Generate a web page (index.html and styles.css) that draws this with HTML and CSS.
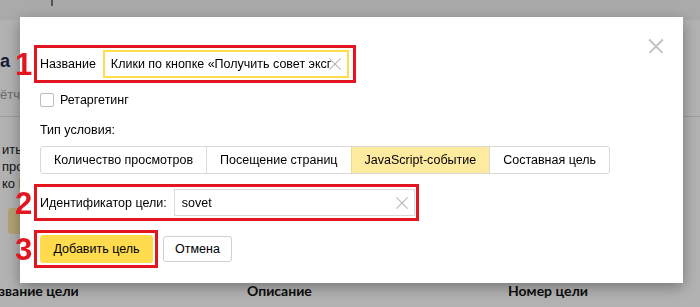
FILE: index.html
```html
<!DOCTYPE html>
<html lang="ru">
<head>
  <meta charset="UTF-8">
  <title>Добавить цель</title>
  <link rel="stylesheet" href="styles.css">
</head>
<body>
  <div class="page">
    <div class="page-header"><span class="header-mark"></span></div>
    <div class="page-title">а</div>
    <div class="page-sub">ётч</div>
    <div class="page-line"></div>
    <div class="page-text">
      <div>ить</div>
      <div>про</div>
      <div>ко L</div>
    </div>
    <div class="page-btn"></div>
    <div class="goal-head">
      <span class="col-name">Название цели</span>
      <span class="col-desc">Описание</span>
      <span class="col-num">Номер цели</span>
    </div>
  </div>

  <div class="overlay"></div>

  <div class="modal">
    <span class="modal-close"></span>

    <div class="mark-box mark-name">
      <span class="mark-num">1</span>
      <label class="field-label">Название</label>
      <div class="input input-active">
        <span class="input-text">Клики по кнопке «Получить совет эксперта»</span>
        <span class="clear"></span>
      </div>
    </div>

    <label class="check-row">
      <span class="checkbox"></span>
      Ретаргетинг
    </label>

    <div class="cond-title">Тип условия:</div>
    <div class="tabs">
      <span class="tab">Количество просмотров</span>
      <span class="tab">Посещение страниц</span>
      <span class="tab tab-selected">JavaScript-событие</span>
      <span class="tab">Составная цель</span>
    </div>

    <div class="mark-box mark-id">
      <span class="mark-num">2</span>
      <label class="field-label">Идентификатор цели:</label>
      <div class="input input-id">
        <span class="input-text">sovet</span>
        <span class="clear"></span>
      </div>
    </div>

    <div class="actions">
      <div class="mark-box mark-btn">
        <span class="mark-num">3</span>
        <button class="btn btn-add">Добавить цель</button>
      </div>
      <button class="btn btn-cancel">Отмена</button>
    </div>
  </div>
</body>
</html>
```

FILE: styles.css
```css
body {
  margin: 0;
  width: 700px;
  height: 307px;
  overflow: hidden;
  background: #fff;
  font-family: Arial, "Liberation Sans", sans-serif;
  font-size: 13px;
  color: #000;
}
.page {
  height: 307px;
}
.page-header {
  height: 20px;
  background: #f4f4f4;
  position: relative;
}
.header-mark {
  position: absolute;
  left: 51px;
  top: 0;
  width: 2px;
  height: 6px;
  background: #777;
}
.page-title {
  margin: 31px 0 0 0;
  font-size: 18px;
  font-weight: bold;
  color: #1e2a4f;
  line-height: 20px;
}
.page-sub {
  margin: 16px 0 0 0;
  color: #999;
  font-size: 13px;
}
.page-line {
  margin-top: 14px;
  height: 1px;
  background: #e2e2e2;
}
.page-text {
  margin: 24px 0 0 2px;
  font-size: 13px;
  line-height: 17px;
  color: #222;
}
.page-btn {
  margin: 16px 0 0 8px;
  width: 30px;
  height: 26px;
  border-radius: 3px;
  background: #ffe9a8;
}
.goal-head {
  margin-top: 48px;
  font-family: Lato, "Open Sans", sans-serif;
  font-weight: bold;
  font-size: 14px;
  color: #111;
  display: flex;
}
.col-name { margin-left: -19px; width: 266px; }
.col-desc { width: 261px; }
.overlay {
  position: fixed;
  inset: 0;
  background: rgba(0, 0, 0, 0.3);
}
.modal {
  position: fixed;
  left: 20px;
  top: 17px;
  width: 663px;
  height: 266px;
  box-sizing: border-box;
  padding: 28px 20px 0;
  background: #fff;
  font-size: 12.5px;
  box-shadow: 0 4px 14px rgba(0, 0, 0, 0.35);
}
.modal-close {
  position: absolute;
  right: 20px;
  top: 22px;
  width: 14px;
  height: 14px;
}
.modal-close::before,
.modal-close::after,
.clear::before,
.clear::after {
  content: "";
  position: absolute;
  left: 50%;
  top: 50%;
  width: 19px;
  height: 1.5px;
  background: #c4c4c4;
  transform: translate(-50%, -50%) rotate(45deg);
}
.modal-close::after,
.clear::after {
  transform: translate(-50%, -50%) rotate(-45deg);
}
.mark-box {
  position: relative;
  display: flex;
  align-items: center;
  margin-left: -6px;
  border: 3px solid #e3151f;
  padding: 2px 4px 2px 3px;
}
.mark-name { width: 322px; box-sizing: border-box; }
.mark-id { width: 385px; box-sizing: border-box; padding-right: 1px; }
.mark-num {
  position: absolute;
  left: -22px;
  top: 50%;
  transform: translateY(-50%);
  font-size: 31px;
  font-weight: bold;
  color: #e3151f;
  line-height: 1;
}
.field-label {
  margin-right: 7px;
  white-space: nowrap;
}
.input {
  position: relative;
  flex: 1;
  height: 28px;
  box-sizing: border-box;
  border: 1px solid #d9d9d9;
  display: flex;
  align-items: center;
  padding: 0 16px 0 7px;
  overflow: hidden;
}
.input-active {
  border: 2px solid #ffdb4d;
  padding-left: 6px;
}
.input-id { height: 27px; }
.input-text {
  white-space: nowrap;
  overflow: hidden;
  font-size: 12.5px;
}
.clear {
  position: absolute;
  right: 6px;
  top: 50%;
  width: 12px;
  height: 12px;
  margin-top: -6px;
}
.clear::before,
.clear::after {
  width: 16px;
  background: #b5b5b5;
  height: 1px;
}
.check-row {
  display: flex;
  align-items: center;
  margin-top: 10px;
  height: 14px;
}
.checkbox {
  width: 12px;
  height: 12px;
  border: 1px solid #bdbdbd;
  border-radius: 2px;
  margin-right: 6px;
}
.cond-title {
  margin-top: 16px;
}
.tabs {
  display: flex;
  margin-top: 9px;
  width: max-content;
  border: 1px solid #d9d9d9;
  border-radius: 3px;
  overflow: hidden;
}
.tab {
  height: 26px;
  line-height: 26px;
  padding: 0 13px;
  border-left: 1px solid #d9d9d9;
}
.tab:first-child { border-left: none; }
.tab-selected {
  background: #ffeba0;
  border-left-color: #f0d98a;
}
.mark-id {
  margin-top: 10px;
}
.actions {
  display: flex;
  align-items: center;
  gap: 5px;
  margin-top: 9px;
}
.mark-btn {
  padding: 2px 2px 2px 3px;
}
.btn {
  height: 28px;
  border-radius: 3px;
  font-family: Arial, "Liberation Sans", sans-serif;
  font-size: 12.5px;
  color: #000;
  cursor: pointer;
  padding: 0;
  white-space: nowrap;
}
.btn-add {
  width: 113px;
  border: none;
  background: #ffdb4d;
}
.btn-cancel {
  width: 69px;
  height: 26px;
  background: #fff;
  border: 1px solid #d0d0d0;
}
```
